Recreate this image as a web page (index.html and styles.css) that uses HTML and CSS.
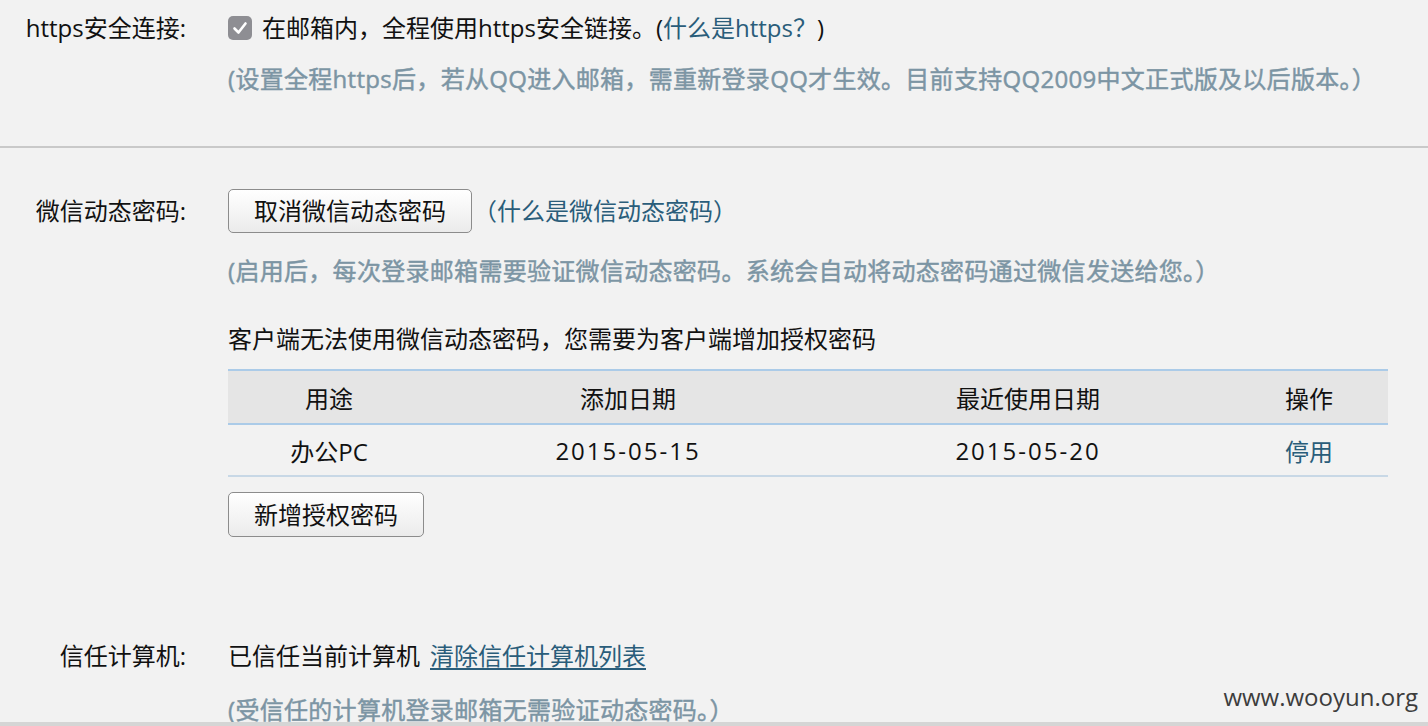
FILE: index.html
```html
<!DOCTYPE html>
<html lang="zh-CN">
<head>
<meta charset="utf-8">
<title>账户安全设置</title>
<link rel="stylesheet" href="styles.css">
</head>
<body>
<div class="page">
  <section class="block block-https">
    <div class="row">
      <div class="label">https安全连接:</div>
      <div class="content">
        <div class="line">
          <span class="checkbox"><svg viewBox="0 0 24 24" width="24" height="24"><path d="M6.5 12.5 L10.5 16.5 L17.5 7.5" fill="none" stroke="#fff" stroke-width="2.6" stroke-linecap="round" stroke-linejoin="round"/></svg></span>
          <span>在邮箱内，全程使用https安全链接。(<a class="link" href="#">什么是https？</a>)</span>
        </div>
        <div class="note note-first">(设置全程https后，若从QQ进入邮箱，需重新登录QQ才生效。目前支持QQ2009中文正式版及以后版本。）</div>
      </div>
    </div>
  </section>

  <section class="block block-wechat">
    <div class="row">
      <div class="label label-btn">微信动态密码:</div>
      <div class="content">
        <div class="line">
          <button class="btn btn-cancel" type="button">取消微信动态密码</button>
          <a class="link link-what" href="#">（什么是微信动态密码）</a>
        </div>
        <div class="note note-wechat">(启用后，每次登录邮箱需要验证微信动态密码。系统会自动将动态密码通过微信发送给您。）</div>
        <div class="plain client-tip">客户端无法使用微信动态密码，您需要为客户端增加授权密码</div>
        <table class="auth-table">
          <colgroup>
            <col class="c1"><col class="c2"><col class="c3"><col class="c4">
          </colgroup>
          <thead>
            <tr><th>用途</th><th>添加日期</th><th>最近使用日期</th><th>操作</th></tr>
          </thead>
          <tbody>
            <tr><td>办公PC</td><td class="date">2015-05-15</td><td class="date">2015-05-20</td><td><a class="link" href="#">停用</a></td></tr>
          </tbody>
        </table>
        <button class="btn btn-add" type="button">新增授权密码</button>
      </div>
    </div>
  </section>

  <section class="block block-trust">
    <div class="row">
      <div class="label">信任计算机:</div>
      <div class="content">
        <div class="line">
          <span>已信任当前计算机</span>
          <a class="link link-under" href="#">清除信任计算机列表</a>
        </div>
        <div class="note note-trust">(受信任的计算机登录邮箱无需验证动态密码。）</div>
      </div>
    </div>
  </section>

  <div class="watermark">www.wooyun.org</div>
</div>
</body>
</html>
```

FILE: styles.css
```css
* { box-sizing: border-box; }

html, body {
  margin: 0;
  padding: 0;
  background: #f2f2f2;
}

body {
  font-family: "Open Sans", "Noto Sans CJK SC", sans-serif;
  font-size: 24px;
  color: #111;
}

.page {
  position: relative;
  height: 726px;
  overflow: hidden;
  border-bottom: 4px solid #d5d5d5;
}

.block-https {
  padding-top: 11px;
  padding-bottom: 50px;
  border-bottom: 2px solid #c9c9c9;
}

.block-wechat {
  padding-top: 41px;
}

.block-trust {
  padding-top: 102px;
}

.row {
  display: grid;
  grid-template-columns: 186px 1fr;
  column-gap: 42px;
}

.label {
  text-align: right;
  line-height: 34px;
  white-space: nowrap;
}

.label-btn {
  line-height: 44px;
}

.content {
  display: flex;
  flex-direction: column;
  align-items: flex-start;
}

.line {
  display: flex;
  align-items: center;
  min-height: 34px;
  line-height: 34px;
  white-space: nowrap;
}

.checkbox {
  width: 24px;
  height: 24px;
  border-radius: 5px;
  background: #8e8e93;
  display: inline-flex;
  margin-right: 10px;
}

.link {
  color: #2a5d7a;
  text-decoration: none;
}

.link-what {
  margin-left: 1px;
}

.link-under {
  margin-left: 10px;
  text-decoration: underline;
  text-underline-offset: 3px;
}

.note {
  color: #7c95a4;
  line-height: 34px;
  white-space: nowrap;
  letter-spacing: 0.3px;
  -webkit-text-stroke: 0.45px #7c95a4;
}

.note-first { margin-top: 17px; }
.note-wechat { margin-top: 21px; }
.note-trust { margin-top: 20px; }

.plain {
  line-height: 34px;
}

.client-tip {
  margin-top: 34px;
}

.btn {
  font-family: "Open Sans", "Noto Sans CJK SC", sans-serif;
  font-size: 24px;
  line-height: 24px;
  color: #111;
  background: linear-gradient(#ffffff, #ebebeb);
  border: 1px solid #8c8c8c;
  border-radius: 5px;
  padding: 9px 25px;
  height: 44px;
  cursor: pointer;
}

.btn-add {
  margin-top: 15px;
  height: 45px;
}

.auth-table {
  margin-top: 13px;
  width: 1160px;
  border-collapse: collapse;
  table-layout: fixed;
}

.auth-table .c1 { width: 202px; }
.auth-table .c2 { width: 396px; }
.auth-table .c3 { width: 404px; }
.auth-table .c4 { width: 158px; }

.auth-table th {
  font-weight: normal;
  background: #e5e5e5;
  height: 54px;
  border-top: 2px solid #abcbe8;
  border-bottom: 2px solid #abcbe8;
  text-align: center;
  padding: 0;
}

.auth-table td {
  height: 52px;
  border-bottom: 2px solid #c8d8e6;
  text-align: center;
  padding: 0;
}

.auth-table .date {
  letter-spacing: 2px;
}

.watermark {
  position: absolute;
  right: 10px;
  top: 680px;
  font-family: "Open Sans", sans-serif;
  font-size: 24px;
  line-height: 34px;
  color: #3d3d3d;
}
```
